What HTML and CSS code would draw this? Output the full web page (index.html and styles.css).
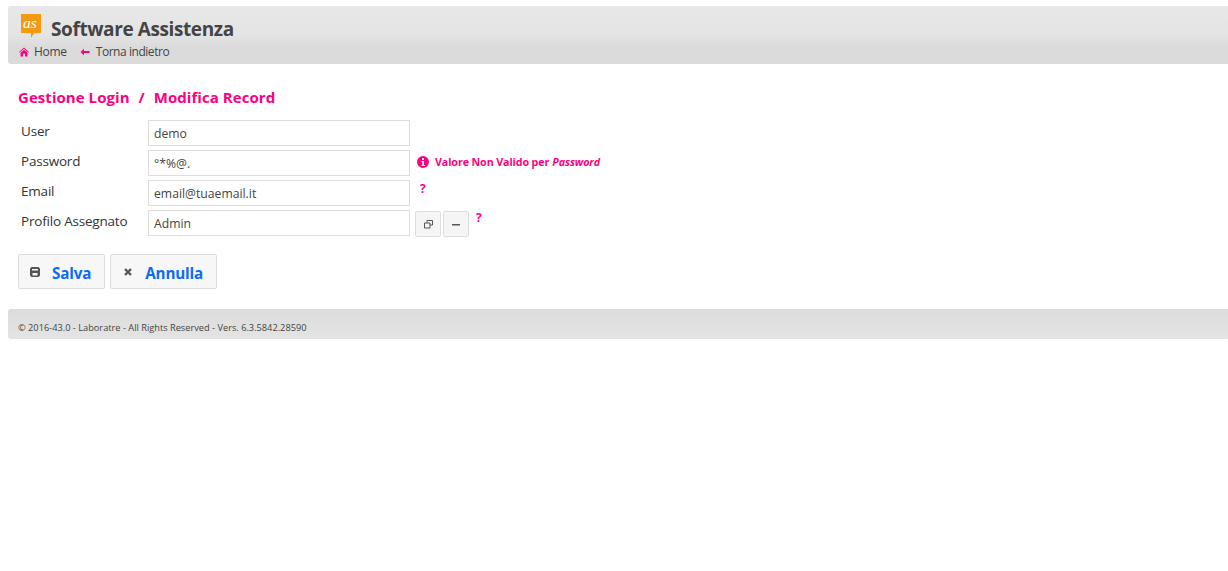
FILE: index.html
```html
<!DOCTYPE html>
<html lang="it">
<head>
<meta charset="utf-8">
<title>Software Assistenza</title>
<link rel="stylesheet" href="styles.css">
</head>
<body>
<header class="topbar">
  <div class="brand">
    <svg class="logo" width="22" height="25" viewBox="0 0 22 25"><path d="M1 0H21V19H14L11 24V19H1Z" fill="#f39a12"/><text x="3" y="14" class="logo-text">as</text></svg>
    <span class="brand-name">Software Assistenza</span>
  </div>
  <nav class="crumbs">
    <a class="crumb"><svg width="10" height="10" viewBox="0 0 10 10" class="pink"><path d="M5 .5 0 5l.6.6L5 1.800l4.400 3.800L10 5ZM1.500 5.700V9.500H4V6.800H6V9.500H8.500V5.700L5 2.800Z"/></svg>Home</a>
    <a class="crumb"><svg width="10" height="10" viewBox="0 0 10 10" class="pink"><path d="M4 1.800 .5 5 4 8.200V6.100H9.500V3.900H4Z"/></svg>Torna indietro</a>
  </nav>
</header>
<main class="content">
  <h1 class="title"><span>Gestione Login</span><span>/</span><span>Modifica Record</span></h1>
  <form class="form">
    <div class="row"><label>User</label><input class="field" value="demo"></div>
    <div class="row"><label>Password</label><input class="field" value="°*%@.">
      <span class="error"><svg width="12" height="12" viewBox="0 0 12 12" class="pink"><path fill-rule="evenodd" d="M6 0a6 6 0 1 0 0 12A6 6 0 0 0 6 0ZM5 2h2v2H5ZM4.500 5H7v4h1v1H4.500V9H5.300V6H4.500Z"/></svg>Valore Non Valido per <em>Password</em></span></div>
    <div class="row"><label>Email</label><input class="field" value="email@tuaemail.it"><span class="help help-email">?</span></div>
    <div class="row"><label>Profilo Assegnato</label><input class="field" value="Admin">
      <button type="button" class="mini"><svg width="9" height="9" viewBox="0 0 9 9" fill="none" stroke="#555"><path d="M3 2.500V.5H8.500V5H6"/><path d="M.5 3H6V8H.5Z"/></svg></button>
      <button type="button" class="mini"><svg width="10" height="10" viewBox="0 0 10 10"><rect x="1" y="5" width="8" height="1.500" fill="#555"/></svg></button>
      <span class="help">?</span></div>
    <div class="actions">
      <button type="button" class="btn"><svg width="10" height="10" viewBox="0 0 10 10"><path fill="#555" fill-rule="evenodd" d="M1.500 0h7L10 1.500v7L8.500 10h-7L0 8.500v-7ZM2 2V3.500H8V2ZM2.500 6V8.500H7.500V6Z"/></svg><span class="btn-text">Salva</span></button>
      <button type="button" class="btn"><svg width="10" height="10" viewBox="0 0 10 10"><path d="M2 2 8 8M8 2 2 8" stroke="#555" stroke-width="2.400"/></svg><span class="btn-text">Annulla</span></button>
    </div>
  </form>
</main>
<footer class="footer">© 2016-43.0 - Laboratre - All Rights Reserved - Vers. 6.3.5842.28590</footer>
</body>
</html>
```
FILE: styles.css
```css
* { box-sizing: border-box; }
body { margin: 6px 0 0 8px; background: #fff; font-family: "Open Sans", "Noto Sans", sans-serif; color: #333; }
svg { flex: none; display: block; }
.pink { fill: #ff0080; }
.topbar { height: 58px; padding: 8px 0 0 12px; border-radius: 3px 0 0 3px; background: linear-gradient(#e8e8e8, #e4e4e4 50%, #dbdbdb 70%, #dbdbdb); }
.brand { display: flex; align-items: flex-start; gap: 9px; height: 29px; }
.logo-text { font-family: "Liberation Serif", serif; font-style: italic; font-size: 15.500px; fill: #fff; }
.brand-name { font-size: 19px; font-weight: 700; line-height: 28px; margin-top: 1px; color: #444; letter-spacing: -.4px; }
.crumbs { display: flex; gap: 13px; margin-top: 1px; margin-left: -1px; }
.crumb { display: flex; align-items: center; gap: 5px; font-size: 12px; line-height: 16px; color: #444; letter-spacing: -.3px; }
.crumb + .crumb { gap: 6px; letter-spacing: -.45px; }
.content { padding: 23px 0 0 10px; }
.title { display: flex; gap: 9px; margin: 0; font-size: 15px; line-height: 20px; font-weight: 700; color: #ff0080; letter-spacing: .05px; }
.form { margin-top: 13px; }
.row { display: flex; align-items: flex-start; height: 30px; }
.row label { width: 130px; padding-left: 3px; font-size: 13.500px; line-height: 20px; margin-top: 1px; color: #333; letter-spacing: -.2px; }
.field { width: 262px; height: 26px; border: 1px solid #ddd; padding: 1px 5px 0; font: inherit; font-size: 12.200px; color: #444; background: #fff; outline: none; }
.error { display: flex; align-items: center; gap: 6px; margin: 0 0 0 7px; height: 24px; font-size: 10.700px; font-weight: 700; color: #ff0080; letter-spacing: -.1px; }
.error em { font-style: italic; margin-left: -3px; }
.help { font-size: 12px; font-weight: 700; color: #ff0080; line-height: 16px; margin-left: 7px; }
.help-email { margin-left: 10px; margin-top: 1px; }
.mini { width: 26px; height: 26px; margin: 1px 0 0 5px; padding: 0; display: flex; align-items: center; justify-content: center; background: #f5f5f5; border: 1px solid #ddd; border-radius: 2px; }
.mini + .mini { margin-left: 2px; }
.actions { display: flex; gap: 5px; margin-top: 14px; }
.btn { display: flex; align-items: center; gap: 12px; height: 35px; padding: 0 13px 0 11px; font: inherit; font-size: 15.200px; font-weight: 700; color: #0a6cf5; background: #f7f7f7; border: 1px solid #ddd; border-radius: 2px; letter-spacing: -.15px; }
.btn + .btn { padding-left: 12px; }
.btn-text { margin-top: 2px; }
.footer { height: 30px; margin-top: 20px; padding-left: 10px; border-radius: 3px 0 0 3px; background: linear-gradient(#dcdcdc, #e4e4e4); font-size: 9.240px; line-height: 37px; color: #444; }
```
